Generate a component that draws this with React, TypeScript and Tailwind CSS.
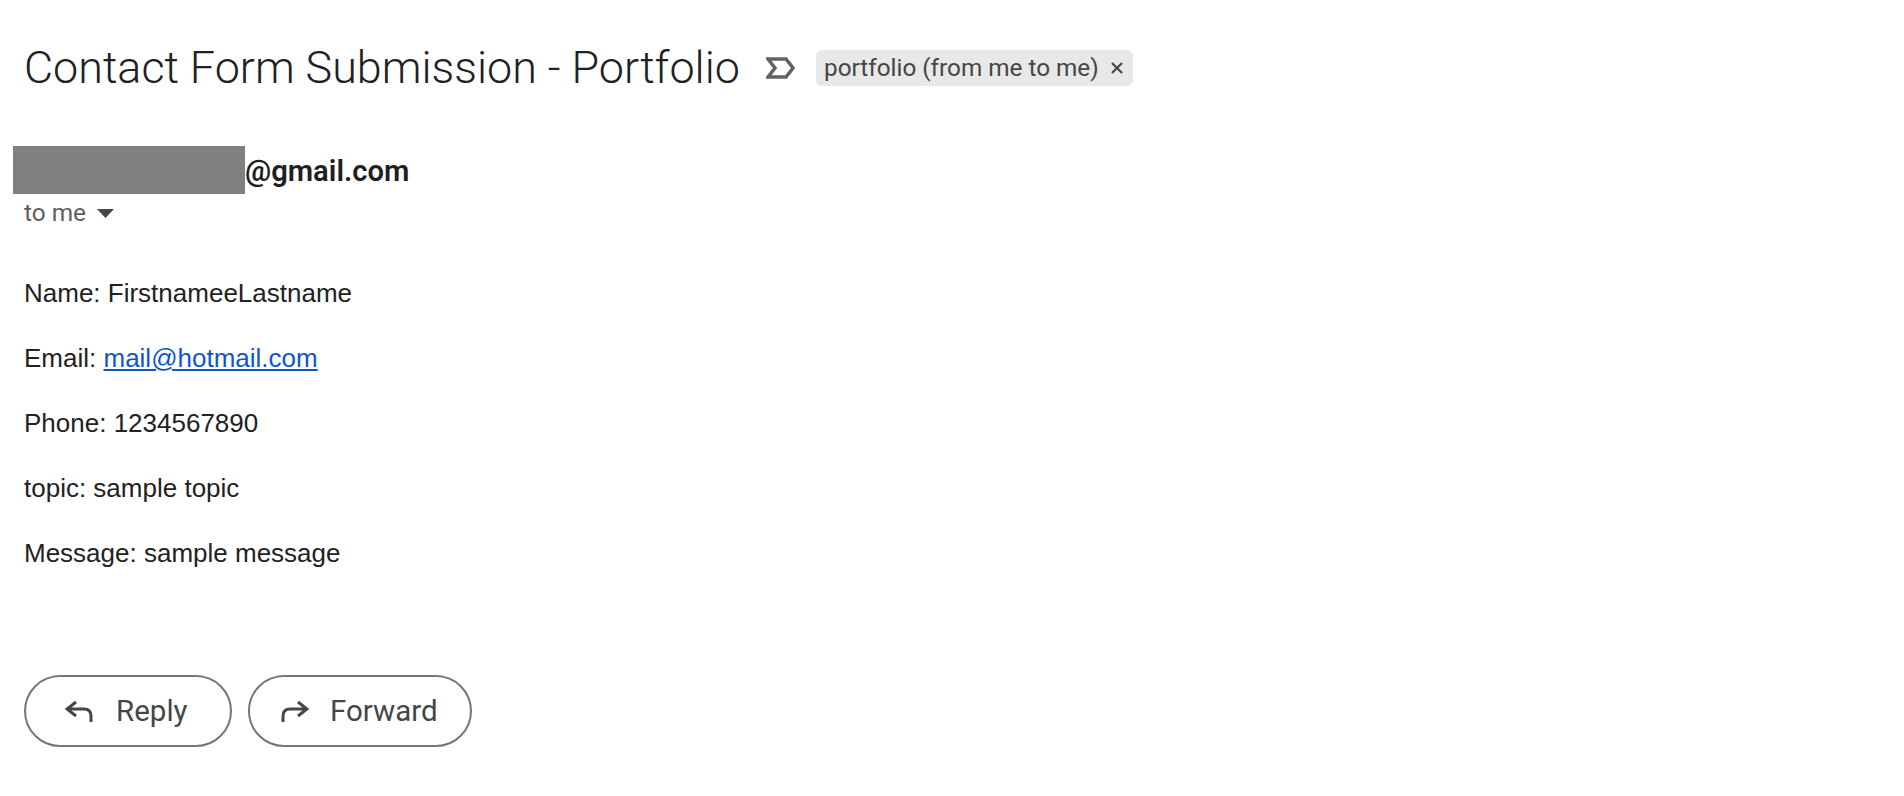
export default function App() {
  const body = "font-['Liberation_Sans',Arial,sans-serif]";
  return (
    <div className="min-h-[796px] w-full bg-white pl-6 pt-[39px] font-['Roboto',sans-serif]">
      <div className="flex h-[58px] items-center">
        <h1 className="w-[715px] whitespace-nowrap text-[44.85px] font-light leading-[58px] text-[#202124]">Contact Form Submission - Portfolio</h1>
        <svg className="ml-[27px] h-[24px] w-[30px]" viewBox="0 0 30 24" fill="none" stroke="#5f6368" strokeWidth="3.500">
          <path d="M2 3h18l7 9-7 9H2l7-9z" />
        </svg>
        <div className="ml-[20px] flex h-[36px] w-[317px] items-center rounded-[6px] bg-[#e8e8e8] pl-2 text-[24.3px] text-[#444746]">
          <span>portfolio (from me to me)</span>
          <svg className="ml-[11px] h-[14px] w-[14px]" viewBox="0 0 14 14" stroke="#444746" strokeWidth="2.200">
            <path d="M2 2l10 10M12 2L2 12" />
          </svg>
        </div>
      </div>
      <div className="relative mt-[49px] h-[45px] pl-[221px] pt-[5px] text-[29.2px] font-semibold leading-[40px] text-[#1f1f1f]">
        <div className="absolute left-[-11px] top-0 h-[48px] w-[232px] bg-[#808080]" />
        @gmail.com
      </div>
      <div className="mt-[4px] flex h-[36px] items-center text-[24.4px] text-[#5e5e5e]">
        <span>to me</span>
        <svg className="ml-[11px] h-[9px] w-[17px]" viewBox="0 0 17 9" fill="#444746">
          <path d="M0 0h17l-8.500 9z" />
        </svg>
      </div>
      <div className={`${body} mt-[45px] flex flex-col gap-[30px] text-[26px] leading-[35px] text-[#222222]`}>
        <p>Name: FirstnameeLastname</p>
        <p>
          Email: <a className="text-[#1155cc] underline" href="#">mail@hotmail.com</a>
        </p>
        <p>Phone: 1234567890</p>
        <p>topic: sample topic</p>
        <p>Message: sample message</p>
      </div>
      <div className="mt-[104px] flex gap-[16px] text-[29.5px] text-[#444746]">
        <button className="flex h-[72px] w-[208px] items-center rounded-[36px] border-2 border-[#747775] pl-[39px]">
          <svg className="h-[24px] w-[28px]" viewBox="0 0 28 24" fill="none" stroke="#444746" strokeWidth="3">
            <path d="M11 3L2 10l9 7M2 10h17q7 0 7 7v6" />
          </svg>
          <span className="ml-[23px]">Reply</span>
        </button>
        <button className="flex h-[72px] w-[224px] items-center rounded-[36px] border-2 border-[#747775] pl-[31px]">
          <svg className="h-[24px] w-[28px]" viewBox="0 0 28 24" fill="none" stroke="#444746" strokeWidth="3">
            <path d="M17 3l9 7-9 7M26 10H9q-7 0-7 7v6" />
          </svg>
          <span className="ml-[21px]">Forward</span>
        </button>
      </div>
    </div>
  );
}
